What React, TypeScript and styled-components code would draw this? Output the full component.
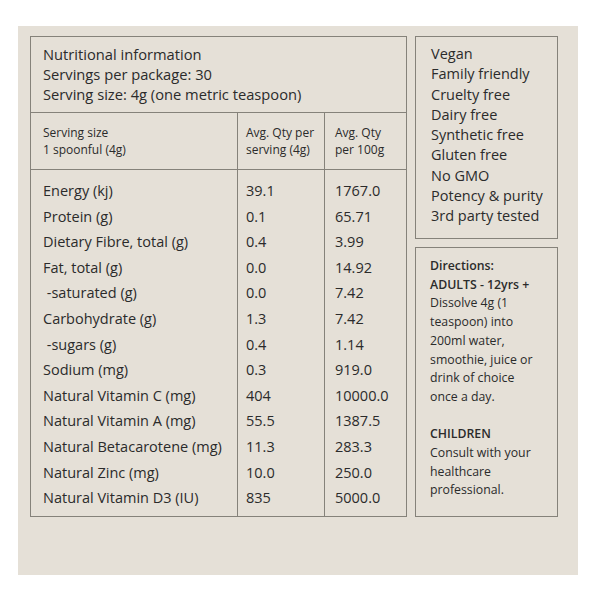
import React from 'react';
import styled, { createGlobalStyle } from 'styled-components';

const GlobalStyle = createGlobalStyle`
  body {
    margin: 0;
    background: #ffffff;
    font-family: "Open Sans", "Liberation Sans", sans-serif;
    color: #2b2b2b;
  }
`

const Page = styled.div`
  padding: 26px 22px 25px 18px;
`

const Panel = styled.div`
  background: #e5e0d7;
  height: 549px;
  box-sizing: border-box;
  padding: 10px 20px 0 12px;
  display: flex;
  align-items: flex-start;
  gap: 8px;
`

const NutritionTable = styled.table`
  border-collapse: collapse;
  border: 1px solid #85827a;
  width: 376px;
  table-layout: fixed;
`

const TitleCell = styled.td`
  padding: 7px 12px 8px;
  font-size: 14.7px;
  line-height: 20px;
  border-bottom: 1px solid #85827a;
`

const HeadCell = styled.td<{ $pad: number }>`
  padding: 11px 6px 11px ${p => p.$pad}px;
  font-size: 12px;
  line-height: 17px;
  border-left: 1px solid #85827a;
  border-bottom: 1px solid #85827a;
  vertical-align: top;
  &:first-child { border-left: none; }
`

const Cell = styled.td<{ $pad: number; $first?: boolean; $last?: boolean }>`
  padding: ${p => (p.$first ? 8 : 0)}px 4px ${p => (p.$last ? 5 : 0)}px ${p => p.$pad}px;
  font-size: 14.5px;
  line-height: 25.6px;
  white-space: nowrap;
  border-left: 1px solid #85827a;
  &:first-child { border-left: none; }
`

const SideColumn = styled.div`
  width: 144px;
  display: flex;
  flex-direction: column;
  gap: 8px;
`

const SideBox = styled.div<{ $height: number }>`
  border: 1px solid #85827a;
  height: ${p => p.$height}px;
  box-sizing: border-box;
`

const ClaimList = styled.ul`
  list-style: none;
  margin: 0;
  padding: 7px 0 0 15px;
  font-size: 14.5px;
  line-height: 20.3px;
`

const Directions = styled.div`
  padding: 9px 20px 0 14px;
  font-size: 12.3px;
  line-height: 18.7px;
  p { margin: 0 0 18.7px; }
  strong { font-weight: 600; }
`

const rows: [string, string, string][] = [
  ['Energy (kj)', '39.1', '1767.0'],
  ['Protein (g)', '0.1', '65.71'],
  ['Dietary Fibre, total (g)', '0.4', '3.99'],
  ['Fat, total (g)', '0.0', '14.92'],
  ['\u00a0-saturated (g)', '0.0', '7.42'],
  ['Carbohydrate (g)', '1.3', '7.42'],
  ['\u00a0-sugars (g)', '0.4', '1.14'],
  ['Sodium (mg)', '0.3', '919.0'],
  ['Natural Vitamin C (mg)', '404', '10000.0'],
  ['Natural Vitamin A (mg)', '55.5', '1387.5'],
  ['Natural Betacarotene (mg)', '11.3', '283.3'],
  ['Natural Zinc (mg)', '10.0', '250.0'],
  ['Natural Vitamin D3 (IU)', '835', '5000.0'],
];

const claims = ['Vegan', 'Family friendly', 'Cruelty free', 'Dairy free', 'Synthetic free', 'Gluten free', 'No GMO', 'Potency & purity', '3rd party tested'];

const App = () => {
  return <Page>
    <GlobalStyle />
    <Panel>
      <NutritionTable>
        <colgroup>
          <col style={{ width: 207 }} />
          <col style={{ width: 87 }} />
          <col style={{ width: 82 }} />
        </colgroup>
        <tbody>
          <tr>
            <TitleCell colSpan={3}>
              Nutritional information<br />
              Servings per package: 30<br />
              Serving size: 4g (one metric teaspoon)
            </TitleCell>
          </tr>
          <tr>
            <HeadCell $pad={12}>Serving size<br />1 spoonful (4g)</HeadCell>
            <HeadCell $pad={8}>Avg. Qty per serving (4g)</HeadCell>
            <HeadCell $pad={10}>Avg. Qty<br />per 100g</HeadCell>
          </tr>
          {rows.map((r, i) => (
            <tr key={r[0]}>
              <Cell $pad={12} $first={i === 0} $last={i === rows.length - 1}>{r[0]}</Cell>
              <Cell $pad={8} $first={i === 0} $last={i === rows.length - 1}>{r[1]}</Cell>
              <Cell $pad={10} $first={i === 0} $last={i === rows.length - 1}>{r[2]}</Cell>
            </tr>
          ))}
        </tbody>
      </NutritionTable>
      <SideColumn>
        <SideBox $height={203}>
          <ClaimList>
            {claims.map(c => <li key={c}>{c}</li>)}
          </ClaimList>
        </SideBox>
        <SideBox $height={270}>
          <Directions>
            <p>
              <strong>Directions:</strong><br />
              <strong>ADULTS - 12yrs +</strong><br />
              Dissolve 4g (1 teaspoon) into 200ml water, smoothie, juice or drink of choice once a day.
            </p>
            <p>
              <strong>CHILDREN</strong><br />
              Consult with your healthcare professional.
            </p>
          </Directions>
        </SideBox>
      </SideColumn>
    </Panel>
  </Page>
}

export default App;
